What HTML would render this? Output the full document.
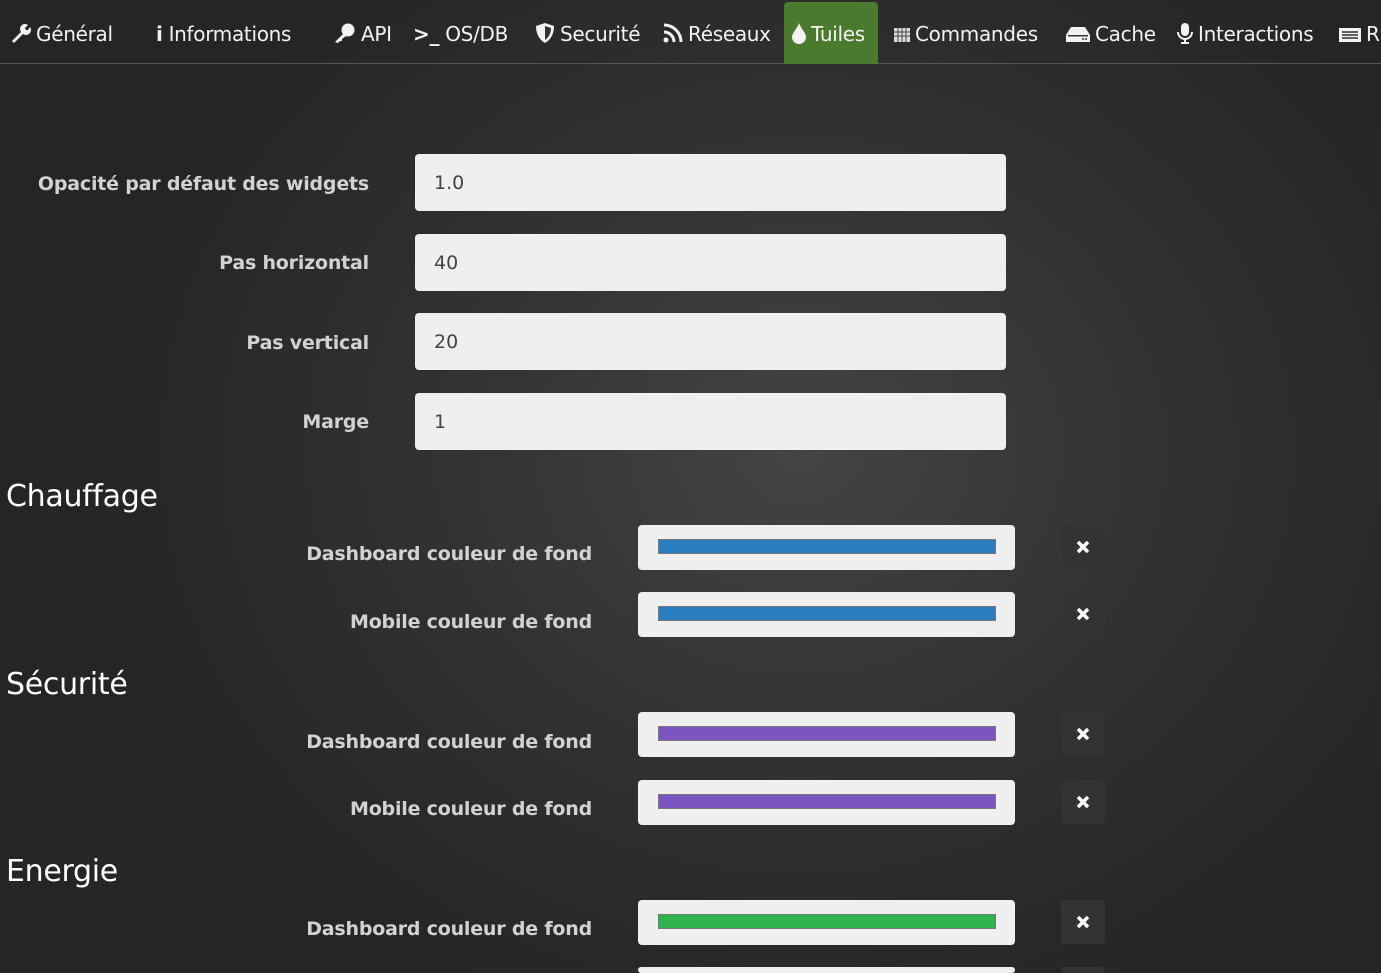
<!DOCTYPE html>
<html style="width:1381px;height:973px;overflow:hidden"><head><meta charset="utf-8"><style>
*{margin:0;padding:0;box-sizing:border-box}
body{width:1381px;height:973px;overflow:hidden;font-family:"DejaVu Sans","Liberation Sans",sans-serif;color:#eee;
background:radial-gradient(ellipse 700px 600px at 800px 450px,#444 0%,#323232 50%,#252525 100%);position:relative}
.nav{position:absolute;left:0;top:0;width:1381px;height:64px;border-bottom:1px solid #555}
.ni{position:absolute;top:22px;font-size:20px;color:#f2f2f2;white-space:nowrap;letter-spacing:-0.3px}
.ni svg{vertical-align:-3px;margin-right:4px}
.tab{position:absolute;left:784px;top:2px;width:94px;height:62px;background:#4a7a2e;border-radius:4px 4px 0 0}
.lbl{position:absolute;right:1012px;font-weight:bold;font-size:19px;color:#d2d2d2;white-space:nowrap;letter-spacing:-0.2px}
.inp{position:absolute;left:415px;width:591px;height:57px;background:#efefef;border-radius:4px;color:#444;font-size:19px;padding:18px 0 0 19px}
.h{position:absolute;left:6px;font-size:30px;color:#fff;letter-spacing:-0.3px}
.cl{position:absolute;right:789px;font-weight:bold;font-size:19px;color:#d2d2d2;white-space:nowrap;letter-spacing:-0.2px}
.cb{position:absolute;left:638px;width:377px;height:45px;background:#efefef;border-radius:4px}
.cb i{position:absolute;left:20px;top:14px;width:338px;height:15px;border:1px solid #777}
.x{position:absolute;left:1061px;width:44px;height:44px;background:#333;border-radius:4px}
.x svg{position:absolute;left:15px;top:15px}
</style></head><body>
<div class="nav">
<div class="tab"></div>
<div class="ni" style="left:10px"><svg width="22" height="22" viewBox="0 0 22 22"><path d="M2 19 L11 10 A5 5 0 0 1 18 3 L15 6 L16 8 L18 8 L20 5 A5 5 0 0 1 13 12 L4 21 Z" fill="#f2f2f2"/></svg>Général</div>
<div class="ni" style="left:156px"><b style="margin-right:6px">i</b>Informations</div>
<div class="ni" style="left:333px"><svg width="24" height="22" viewBox="0 0 24 22"><circle cx="15" cy="8" r="6.5" fill="#f2f2f2"/><path d="M11 11 L2 20 L5 21 L7 19 L9 19 L9 17 L13 14Z" fill="#f2f2f2"/></svg>API</div>
<div class="ni" style="left:413px"><b>&gt;_</b> OS/DB</div>
<div class="ni" style="left:534px"><svg width="22" height="22" viewBox="0 0 22 22"><path d="M11 1 L20 4 C20 13 16 18 11 21 C6 18 2 13 2 4Z" fill="#f2f2f2"/><path d="M11 4 L17 6 C17 12 14 16 11 18Z" fill="#333"/></svg>Securité</div>
<div class="ni" style="left:662px"><svg width="22" height="22" viewBox="0 0 22 22" fill="none" stroke="#f2f2f2" stroke-width="3"><circle cx="4" cy="18" r="2.5" fill="#f2f2f2" stroke="none"/><path d="M2 10 A10 10 0 0 1 12 20 M2 3 A17 17 0 0 1 19 20"/></svg>Réseaux</div>
<div class="ni" style="left:791px"><svg width="16" height="22" viewBox="0 0 16 22"><path d="M8 1 C10 7 15 11 15 15 A7 7 0 0 1 1 15 C1 11 6 7 8 1Z" fill="#f2f2f2"/></svg>Tuiles</div>
<div class="ni" style="left:893px"><svg width="18" height="18" viewBox="0 0 18 18"><rect x="1" y="2" width="16" height="14" fill="#ddd"/><path d="M1 6H17M1 10H17M5 2V16M9 2V16M13 2V16" stroke="#444" stroke-width="1"/></svg>Commandes</div>
<div class="ni" style="left:1065px"><svg width="26" height="20" viewBox="0 0 26 20"><path d="M6 3 H20 L25 11 V18 H1 V11Z" fill="#f2f2f2"/><rect x="3" y="11" width="20" height="1.5" fill="#333"/><circle cx="18" cy="15" r="1" fill="#333"/><circle cx="21" cy="15" r="1" fill="#333"/></svg>Cache</div>
<div class="ni" style="left:1176px"><svg width="18" height="22" viewBox="0 0 18 22"><rect x="5" y="1" width="8" height="13" rx="4" fill="#f2f2f2"/><path d="M2 10 A7 7 0 0 0 16 10 M9 17 V21 M5 21 H13" stroke="#f2f2f2" stroke-width="2" fill="none"/></svg>Interactions</div>
<div class="ni" style="left:1338px"><svg width="24" height="18" viewBox="0 0 24 18"><rect x="1" y="2" width="22" height="14" fill="#f2f2f2"/><path d="M4 6H20M4 9H20M4 12H20" stroke="#333" stroke-width="1.5"/></svg>R</div>
</div>

<div class="lbl" style="top:173px">Opacité par défaut des widgets</div><div class="inp" style="top:154px">1.0</div>
<div class="lbl" style="top:252px">Pas horizontal</div><div class="inp" style="top:234px">40</div>
<div class="lbl" style="top:332px">Pas vertical</div><div class="inp" style="top:313px">20</div>
<div class="lbl" style="top:411px">Marge</div><div class="inp" style="top:393px">1</div>

<div class="h" style="top:479px">Chauffage</div>
<div class="cl" style="top:543px">Dashboard couleur de fond</div><div class="cb" style="top:525px"><i style="background:#2a7ec0"></i></div><div class="x" style="top:525px"><svg width="14" height="14"><path d="M2 2L12 12M12 2L2 12" stroke="#fff" stroke-width="3.5"/></svg></div>
<div class="cl" style="top:611px">Mobile couleur de fond</div><div class="cb" style="top:592px"><i style="background:#2a7ec0"></i></div><div class="x" style="top:592px"><svg width="14" height="14"><path d="M2 2L12 12M12 2L2 12" stroke="#fff" stroke-width="3.5"/></svg></div>

<div class="h" style="top:667px">Sécurité</div>
<div class="cl" style="top:731px">Dashboard couleur de fond</div><div class="cb" style="top:712px"><i style="background:#7c56c0"></i></div><div class="x" style="top:712px"><svg width="14" height="14"><path d="M2 2L12 12M12 2L2 12" stroke="#fff" stroke-width="3.5"/></svg></div>
<div class="cl" style="top:798px">Mobile couleur de fond</div><div class="cb" style="top:780px"><i style="background:#7c56c0"></i></div><div class="x" style="top:780px"><svg width="14" height="14"><path d="M2 2L12 12M12 2L2 12" stroke="#fff" stroke-width="3.5"/></svg></div>

<div class="h" style="top:854px">Energie</div>
<div class="cl" style="top:918px">Dashboard couleur de fond</div><div class="cb" style="top:900px"><i style="background:#2eb34e"></i></div><div class="x" style="top:900px"><svg width="14" height="14"><path d="M2 2L12 12M12 2L2 12" stroke="#fff" stroke-width="3.5"/></svg></div>
<div class="cb" style="top:967px;height:6px"></div><div class="x" style="top:967px;height:6px"></div>
</body></html>
